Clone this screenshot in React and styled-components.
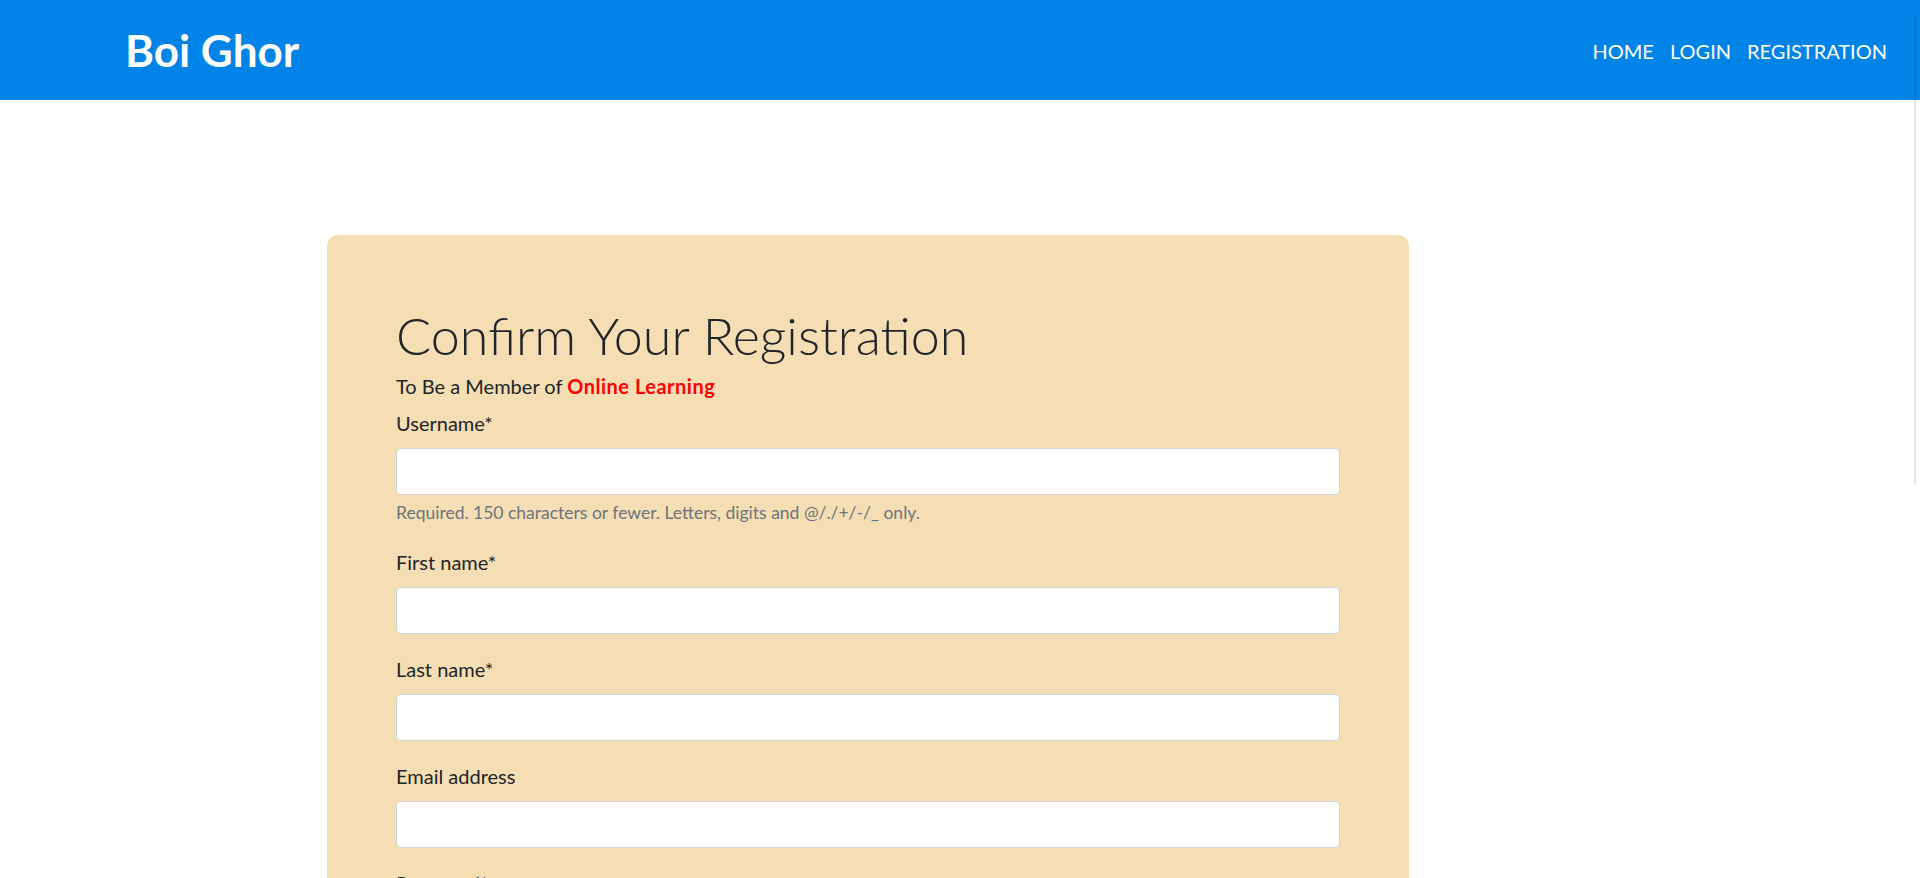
import React from 'react';
import styled, { createGlobalStyle } from 'styled-components';

const GlobalStyle = createGlobalStyle`
  html, body {
    margin: 0;
    padding: 0;
    height: 100%;
    overflow: hidden;
  }

  body {
    font-family: Lato, "Open Sans", "Liberation Sans", sans-serif;
    color: #212529;
    background: #fff;
  }

  * {
    box-sizing: border-box;
  }
`;

const Navbar = styled.nav`
  display: flex;
  justify-content: space-between;
  align-items: center;
  height: 100px;
  padding: 0 25px 0 125px;
  background: #0283e7;
`;

const Brand = styled.a`
  font-size: 44px;
  font-weight: 700;
  line-height: 1.2;
  color: #fff;
  text-decoration: none;
`;

const NavList = styled.ul`
  display: flex;
  margin: 0;
  padding: 2px 0 0;
  list-style: none;
`;

const NavLink = styled.a`
  display: block;
  padding: 0 8px;
  font-size: 20px;
  line-height: 30px;
  color: #fff;
  text-decoration: none;
  text-transform: uppercase;
`;

const Main = styled.main`
  padding: 135px 0 0 327px;
`;

const Card = styled.section`
  width: 1082px;
  padding: 69px 69px 40px;
  background: #f5deb3;
  border-radius: 10px;
`;

const Title = styled.h1`
  margin: 0 0 5px;
  font-size: 52px;
  font-weight: 300;
  line-height: 1.2;
`;

const Lead = styled.p`
  margin: 0 0 7px;
  font-size: 20px;
  line-height: 30px;
`;

const Highlight = styled.strong`
  color: #ff0000;
  font-weight: 700;
  letter-spacing: 0.5px;
`;

const Field = styled.div`
  margin-bottom: 20px;
`;

const Label = styled.label`
  display: block;
  margin-bottom: 10px;
  font-size: 20px;
  line-height: 30px;
`;

const Input = styled.input`
  display: block;
  width: 100%;
  height: 47px;
  padding: 0 15px;
  font: inherit;
  font-size: 20px;
  color: #495057;
  background: #fff;
  border: 1px solid #ced4da;
  border-radius: 5px;
`;

const Help = styled.small`
  display: block;
  margin-top: 5px;
  font-size: 17.5px;
  line-height: 1.5;
  color: #6c757d;
`;

const ScrollThumb = styled.div`
  position: fixed;
  top: 15px;
  right: 4px;
  width: 2px;
  height: 469px;
  border-radius: 1px;
  background: rgba(0, 0, 0, 0.1);
`;

const fields = [
  {
    id: 'username',
    label: 'Username*',
    help: 'Required. 150 characters or fewer. Letters, digits and @/./+/-/_ only.',
  },
  { id: 'first_name', label: 'First name*' },
  { id: 'last_name', label: 'Last name*' },
  { id: 'email', label: 'Email address', type: 'email' },
  { id: 'password1', label: 'Password*', type: 'password' },
  { id: 'password2', label: 'Password confirmation*', type: 'password' },
];

export default function App() {
  return (
    <>
      <GlobalStyle />
      <Navbar>
        <Brand href="#">Boi Ghor</Brand>
        <NavList>
          {['Home', 'Login', 'Registration'].map((item) => (
            <li key={item}>
              <NavLink href="#">{item}</NavLink>
            </li>
          ))}
        </NavList>
      </Navbar>
      <Main>
        <Card>
          <Title>Confirm Your Registration</Title>
          <Lead>
            To Be a Member of <Highlight>Online Learning</Highlight>
          </Lead>
          <form>
            {fields.map(({ id, label, help, type = 'text' }) => (
              <Field key={id}>
                <Label htmlFor={id}>{label}</Label>
                <Input id={id} name={id} type={type} />
                {help && <Help>{help}</Help>}
              </Field>
            ))}
          </form>
        </Card>
      </Main>
      <ScrollThumb />
    </>
  );
}
